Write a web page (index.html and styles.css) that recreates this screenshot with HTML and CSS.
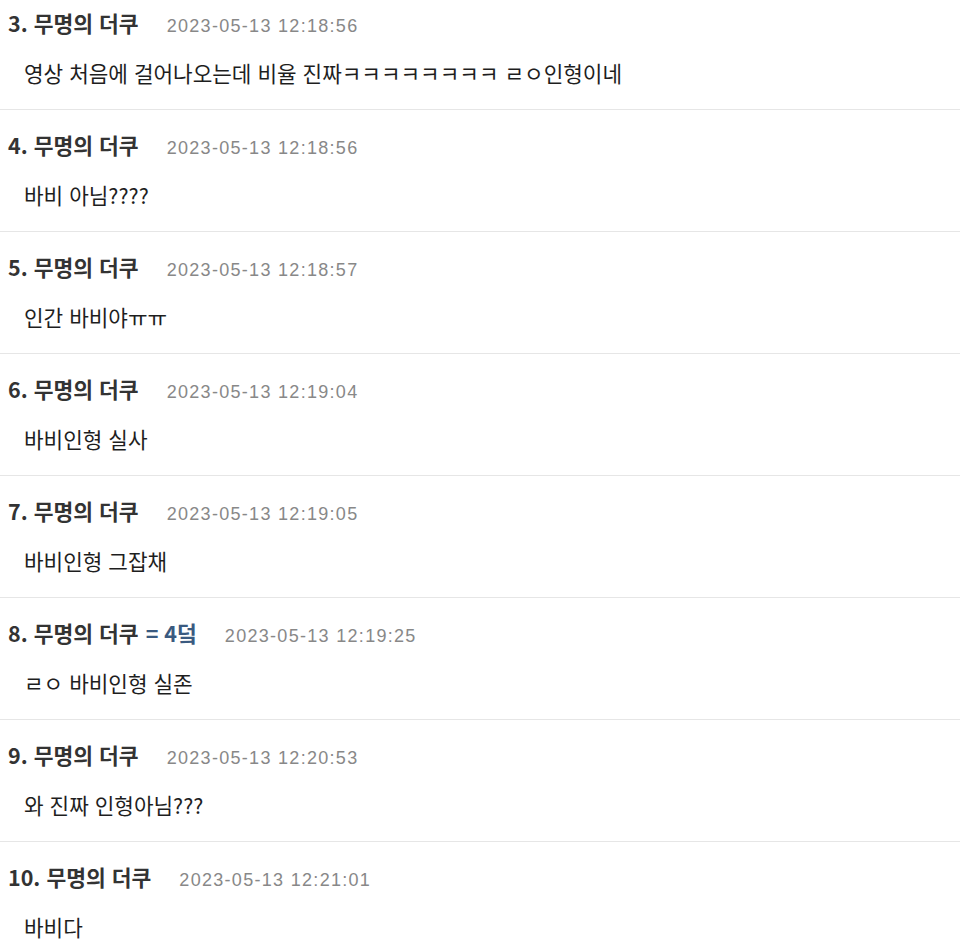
FILE: index.html
```html
<!DOCTYPE html>
<html lang="ko">
<head>
<meta charset="utf-8">
<link rel="stylesheet" href="styles.css">
</head>
<body>
<ul class="comments">
  <li class="comment"><div class="head"><span class="name">3. 무명의 더쿠</span><span class="date">2023-05-13 12:18:56</span></div><p class="text">영상 처음에 걸어나오는데 비율 진짜ㅋㅋㅋㅋㅋㅋㅋㅋ ㄹㅇ인형이네</p></li>
  <li class="comment"><div class="head"><span class="name">4. 무명의 더쿠</span><span class="date">2023-05-13 12:18:56</span></div><p class="text">바비 아님????</p></li>
  <li class="comment"><div class="head"><span class="name">5. 무명의 더쿠</span><span class="date">2023-05-13 12:18:57</span></div><p class="text">인간 바비야ㅠㅠ</p></li>
  <li class="comment"><div class="head"><span class="name">6. 무명의 더쿠</span><span class="date">2023-05-13 12:19:04</span></div><p class="text">바비인형 실사</p></li>
  <li class="comment"><div class="head"><span class="name">7. 무명의 더쿠</span><span class="date">2023-05-13 12:19:05</span></div><p class="text">바비인형 그잡채</p></li>
  <li class="comment"><div class="head"><span class="name">8. 무명의 더쿠 <span class="ref">= 4덬</span></span><span class="date">2023-05-13 12:19:25</span></div><p class="text">ㄹㅇ 바비인형 실존</p></li>
  <li class="comment"><div class="head"><span class="name">9. 무명의 더쿠</span><span class="date">2023-05-13 12:20:53</span></div><p class="text">와 진짜 인형아님???</p></li>
  <li class="comment"><div class="head"><span class="name">10. 무명의 더쿠</span><span class="date">2023-05-13 12:21:01</span></div><p class="text">바비다</p></li>
</ul>
</body>
</html>
```
FILE: styles.css
```css
html, body {
  margin: 0;
  padding: 0;
  background: #fff;
}
body {
  font-family: "Noto Sans CJK KR", "Noto Sans", sans-serif;
  color: #222;
  overflow: hidden;
}
.comments {
  list-style: none;
  margin: -12px 0 0 0;
  padding: 0;
}
.comment {
  height: 121px;
  border-bottom: 1px solid #e6e6e6;
  padding: 0 0 0 8px;
}
.head {
  display: flex;
  align-items: baseline;
  gap: 28px;
  height: 36px;
  padding-top: 19px;
}
.name {
  font-weight: 700;
  font-size: 21.5px;
  color: #333;
}
.ref {
  color: #3a5a80;
  margin-left: 1px;
}
.date {
  font-family: "Liberation Sans", sans-serif;
  font-size: 18px;
  color: #888;
  letter-spacing: 1.3px;
}
.text {
  margin: 15px 0 0 16px;
  font-size: 21.3px;
  line-height: 30px;
  color: #1e1e1e;
}
```
